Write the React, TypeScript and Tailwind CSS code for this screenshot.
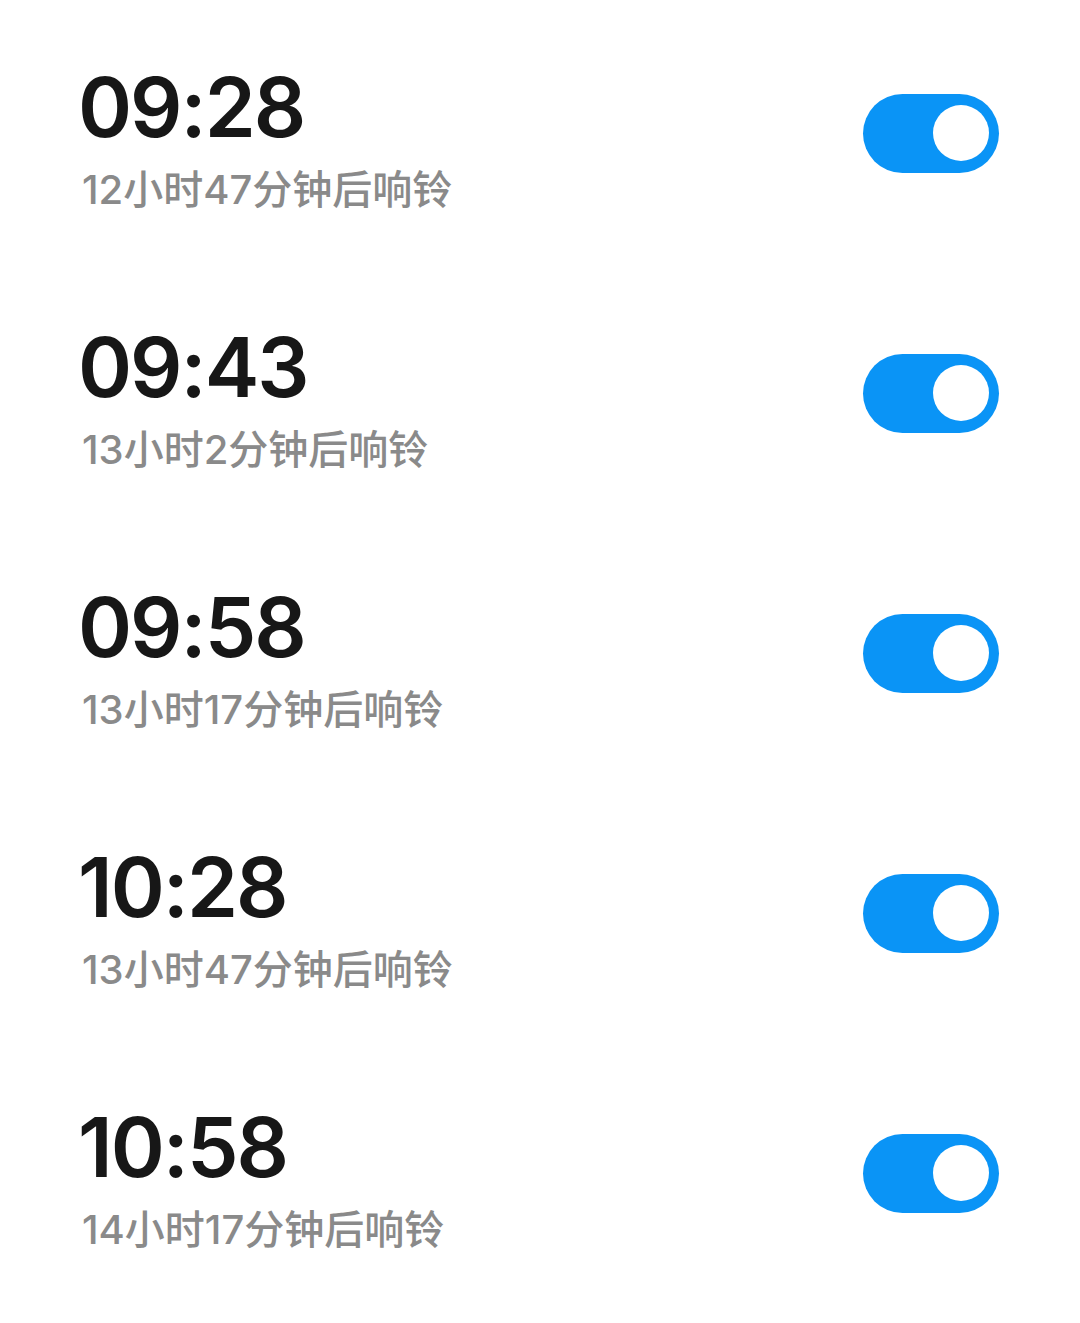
import React from "react";

const alarms = [
  { time: "09:28", sub: "12小时47分钟后响铃" },
  { time: "09:43", sub: "13小时2分钟后响铃" },
  { time: "09:58", sub: "13小时17分钟后响铃" },
  { time: "10:28", sub: "13小时47分钟后响铃" },
  { time: "10:58", sub: "14小时17分钟后响铃" },
];

function Toggle() {
  return (
    <div className="self-center w-[136px] h-[79px] rounded-full bg-[#0a94f6] flex items-center justify-end pr-[10px]">
      <div className="w-[56px] h-[56px] rounded-full bg-white" />
    </div>
  );
}

export default function App() {
  return (
    <div className="w-[1080px] h-[1323px] bg-white pt-[3px]">
      {alarms.map((a) => (
        <div key={a.time} className="h-[260px] flex justify-between pl-[78px] pr-[81px]">
          <div className="flex flex-col pt-[59px]">
            <div
              className="text-[82px] leading-[92px] font-semibold tracking-[-2px] text-[#171717]"
              style={{ fontFamily: 'Inter, "Noto Sans", sans-serif' }}
            >
              {a.time}
            </div>
            <div
              className="mt-[11px] text-[40px] leading-[50px] font-medium text-[#8a8a8a] pl-[4px]"
              style={{ fontFamily: 'Inter, "Noto Sans CJK SC", sans-serif' }}
            >
              {a.sub}
            </div>
          </div>
          <Toggle />
        </div>
      ))}
    </div>
  );
}
